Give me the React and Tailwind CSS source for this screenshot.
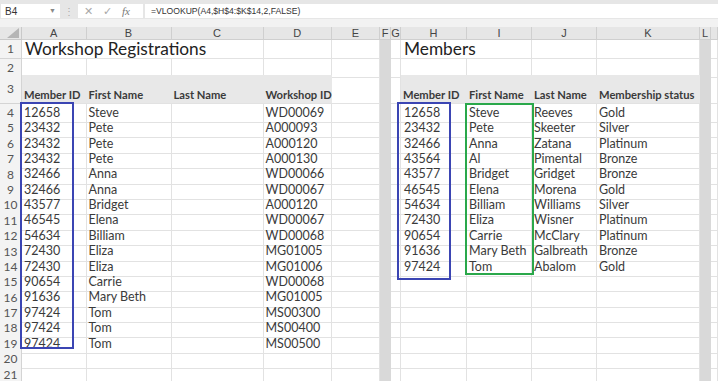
import React from 'react';

const COLS = ['A', 'B', 'C', 'D', 'E', 'F', 'G', 'H', 'I', 'J', 'K', 'L', 'M'];

const left = [
  ['12658', 'Steve', 'WD00069'],
  ['23432', 'Pete', 'A000093'],
  ['23432', 'Pete', 'A000120'],
  ['23432', 'Pete', 'A000130'],
  ['32466', 'Anna', 'WD00066'],
  ['32466', 'Anna', 'WD00067'],
  ['43577', 'Bridget', 'A000120'],
  ['46545', 'Elena', 'WD00067'],
  ['54634', 'Billiam', 'WD00068'],
  ['72430', 'Eliza', 'MG01005'],
  ['72430', 'Eliza', 'MG01006'],
  ['90654', 'Carrie', 'WD00068'],
  ['91636', 'Mary Beth', 'MG01005'],
  ['97424', 'Tom', 'MS00300'],
  ['97424', 'Tom', 'MS00400'],
  ['97424', 'Tom', 'MS00500'],
];

const members = [
  ['12658', 'Steve', 'Reeves', 'Gold'],
  ['23432', 'Pete', 'Skeeter', 'Silver'],
  ['32466', 'Anna', 'Zatana', 'Platinum'],
  ['43564', 'Al', 'Pimental', 'Bronze'],
  ['43577', 'Bridget', 'Gridget', 'Bronze'],
  ['46545', 'Elena', 'Morena', 'Gold'],
  ['54634', 'Billiam', 'Williams', 'Silver'],
  ['72430', 'Eliza', 'Wisner', 'Platinum'],
  ['90654', 'Carrie', 'McClary', 'Platinum'],
  ['91636', 'Mary Beth', 'Galbreath', 'Bronze'],
  ['97424', 'Tom', 'Abalom', 'Gold'],
];

const GRID =
  'grid grid-cols-[22px_64.5px_85px_92px_68.5px_48px_11px_10px_66px_65px_65px_103px_11px_1fr]';

const Row = ({ label, h, values = {}, fill = false, overflow = [], bold = false, align = 'items-center' }) => (
  <div className={`${GRID} ${h}`}>
    <div className="flex items-center justify-center border-r border-b border-[#d4d4d4] bg-[#f3f3f3] text-[12px] text-[#555]">
      {label}
    </div>
    {COLS.map((c) => {
      let cls;
      if (c === 'F' || c === 'L') {
        cls = 'bg-[#d9d9d9]';
      } else if (fill && ['A', 'B', 'C', 'D', 'H', 'I', 'J', 'K'].includes(c)) {
        cls = 'bg-[#e8e8e8] border-b border-[#e2e2e2]';
      } else if (overflow.includes(c)) {
        cls = 'border-b border-[#e2e2e2]';
      } else {
        cls = 'border-r border-b border-[#e2e2e2]';
      }
      return (
        <div
          key={c}
          className={`${cls} flex ${align} pl-[2px] whitespace-nowrap leading-none text-[#3a3a3a] ${
            bold ? 'font-bold text-[11.2px]' : 'text-[12.5px]'
          }`}
        >
          {values[c]}
        </div>
      );
    })}
  </div>
);

const Toolbar = () => (
  <div className="h-[19px] bg-[#e6e6e6] flex items-end pb-[1px] font-['Liberation_Sans',sans-serif]">
    <div className="ml-[1px] w-[59px] h-[14px] bg-white flex items-center justify-between pl-[4px] pr-[4px] text-[10px] text-[#333]">
      <span>B4</span>
      <span className="text-[7px] text-[#888]">▼</span>
    </div>
    <div className="w-[18px] h-[14px] flex items-center justify-center text-[10px] text-[#aaa]">⋮</div>
    <div className="w-[65px] h-[14px] bg-white flex items-center gap-[10px] pl-[6px] text-[11px] text-[#a8a8a8]">
      <span>✕</span>
      <span>✓</span>
      <span className="italic font-['Liberation_Serif',serif] text-[#777]">fx</span>
    </div>
    <div className="ml-[2px] flex-1 h-[14px] bg-white flex items-center pl-[6px] text-[8.6px] text-[#333]">
      =VLOOKUP(A4,$H$4:$K$14,2,FALSE)
    </div>
  </div>
);

const ColHeader = () => (
  <div className={`${GRID} h-[13px] bg-[#e6e6e6] font-['Liberation_Sans',sans-serif]`}>
    <div className="relative border-r border-b border-[#c9c9c9]">
      <svg className="absolute right-[2px] bottom-[1px]" width="12" height="10" viewBox="0 0 12 10">
        <polygon points="12,0 12,10 0,10" fill="#b5b5b5" />
      </svg>
    </div>
    {COLS.map((c) => (
      <div
        key={c}
        className="flex items-center justify-center border-r border-b border-[#cfcfcf] text-[11px] leading-none text-[#444]"
      >
        {c === 'M' ? '' : c}
      </div>
    ))}
  </div>
);

export default function App() {
  return (
    <div className="relative w-[718px] h-[381px] overflow-hidden bg-white font-['Lato',sans-serif]">
      <Toolbar />
      <div className="h-[8px] bg-[#f2f2f2]" />
      <ColHeader />
      <Row
        label="1"
        h="h-[19px]"
        overflow={['A', 'B', 'H']}
        values={{
          A: <span className="pl-[1px] text-[17.3px] text-[#222]">Workshop Registrations</span>,
          H: <span className="pl-[1px] text-[17.3px] text-[#222]">Members</span>,
        }}
      />
      <Row label="2" h="h-[16px]" />
      <Row
        label="3"
        h="h-[29px]"
        fill
        bold
        align="items-end pb-[3px]"
        values={{
          A: 'Member ID',
          B: 'First Name',
          C: 'Last Name',
          D: 'Workshop ID',
          H: 'Member ID',
          I: 'First Name',
          J: 'Last Name',
          K: 'Membership status',
        }}
      />
      {Array.from({ length: 18 }).map((_, i) => {
        const l = left[i];
        const m = members[i];
        const values = {};
        if (l) {
          values.A = l[0];
          values.B = l[1];
          values.D = l[2];
        }
        if (m) {
          values.H = <span className="pl-[1px]">{m[0]}</span>;
          values.I = m[1];
          values.J = m[2];
          values.K = m[3];
        }
        return <Row key={i} label={String(i + 4)} h="h-[15.4px]" values={values} />;
      })}

      {/* highlight boxes drawn over the sheet */}
      <div className="absolute left-[19.5px] top-[102px] w-[54px] h-[247px] border-2 border-[#3b45b3]" />
      <div className="absolute left-[396.5px] top-[101.5px] w-[54px] h-[178px] border-2 border-[#3b45b3]" />
      <div className="absolute left-[464.5px] top-[102.5px] w-[69.5px] h-[172.5px] border-2 border-[#2aa84a]" />
    </div>
  );
}
